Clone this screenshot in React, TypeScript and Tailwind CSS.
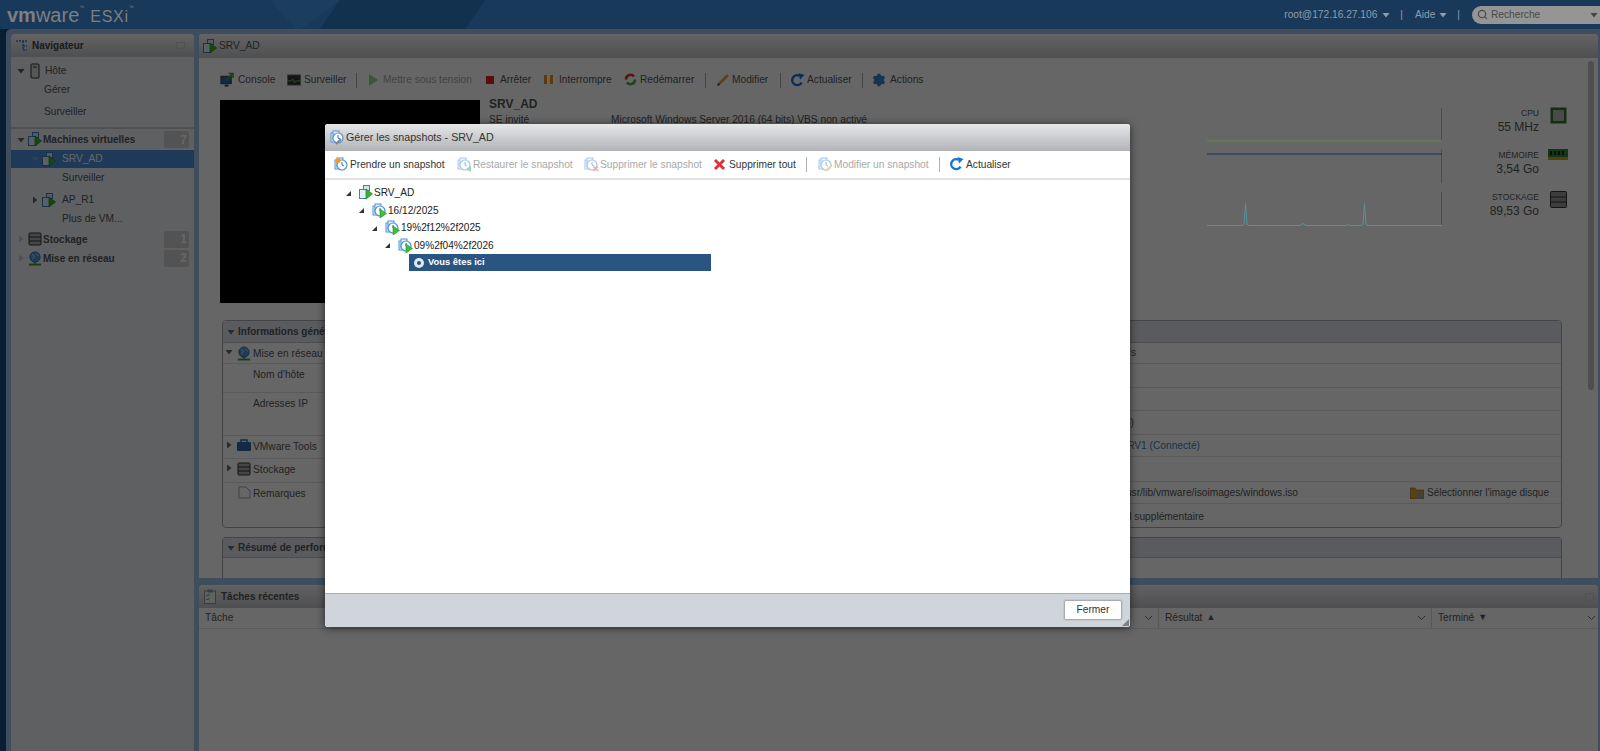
import { ReactNode } from 'react';
import { Search, Settings } from 'lucide-react';

function Caret({ dir = 'down', color = '#5a5a5a' }: { dir?: 'down' | 'right' | 'corner'; color?: string }) {
  const pts = dir === 'down' ? '1.500,3 8.500,3 5,7.500' : dir === 'right' ? '3,1.500 7.500,5 3,8.500' : '8,3 8,8 3,8';
  return (
    <svg width="10" height="10" viewBox="0 0 10 10" className="shrink-0">
      <polygon points={pts} fill={color} />
    </svg>
  );
}

function VmIcon() {
  return (
    <svg width="14" height="15" viewBox="0 0 14 15" className="shrink-0">
      <rect x="4.500" y="0.500" width="6" height="5" fill="#cfe4f8" stroke="#3f7fc4" />
      <rect x="0.500" y="4.500" width="7" height="9" fill="#e4f0fb" stroke="#3f7fc4" />
      <polygon points="7,4 13.500,9 7,14" fill="#35b52f" stroke="#1f7d1c" strokeWidth="0.7" />
    </svg>
  );
}

function SnapIcon({ mark = 'play' }: { mark?: 'play' | 'sun' | 'back' | 'cross' | 'pen' | 'wrench' }) {
  return (
    <svg width="15" height="15" viewBox="0 0 15 15" className="shrink-0">
      <rect x="1" y="3" width="6" height="9" fill="#e8f2fc" stroke="#4d93dc" />
      <rect x="3" y="1" width="6" height="9" fill="#e8f2fc" stroke="#4d93dc" />
      <circle cx="8" cy="8" r="5" fill="#ffffff" stroke="#4d93dc" strokeWidth="1.2" />
      <path d="M8 5v3l2 1" fill="none" stroke="#2a6fb8" strokeWidth="1" />
      {mark === 'play' && <polygon points="8,6 14.500,10.500 8,15" fill="#3cc13a" stroke="#1f8d1c" strokeWidth="0.6" />}
      {mark === 'sun' && <circle cx="4" cy="3.500" r="2.600" fill="#f29a2e" />}
      {mark === 'back' && <polygon points="14,9 9,12 14,15" fill="#4caa5a" />}
      {mark === 'cross' && <path d="M9.500 9.500l4.500 4.500m0-4.500l-4.500 4.500" stroke="#e2534b" strokeWidth="1.600" />}
      {mark === 'pen' && <path d="M8 14l6-6" stroke="#e0a83c" strokeWidth="2.200" />}
      {mark === 'wrench' && <path d="M6 14l5-5" stroke="#7b8794" strokeWidth="2.200" />}
    </svg>
  );
}

function RefreshIcon() {
  return (
    <svg width="14" height="14" viewBox="0 0 14 14" className="shrink-0">
      <path d="M10.600 9.600A5 5 0 1 1 8.400 2.600" fill="none" stroke="#1773d8" strokeWidth="2.400" />
      <polygon points="7.500,0 13.500,2 9,6.500" fill="#1773d8" />
    </svg>
  );
}

function RedX() {
  return (
    <svg width="13" height="13" viewBox="0 0 13 13" className="shrink-0">
      <path d="M2 2l9 9m0-9l-9 9" stroke="#dd3333" strokeWidth="3" />
    </svg>
  );
}

function StorageIcon() {
  return (
    <svg width="14" height="14" viewBox="0 0 14 14" className="shrink-0">
      <rect x="1" y="1" width="12" height="12" rx="1" fill="#b0b0b0" stroke="#333333" />
      <path d="M1 5h12M1 9h12" stroke="#333333" />
    </svg>
  );
}

function NetIcon() {
  return (
    <svg width="14" height="15" viewBox="0 0 15 15" className="shrink-0">
      <circle cx="7.500" cy="6" r="5.500" fill="#4d94e0" stroke="#2b6cb8" />
      <path d="M4 4c2-1 3 0 3 1s-2 1-2 3M9 2c0 2 2 2 3 3" stroke="#cfe4f8" fill="none" />
      <rect x="6" y="11" width="3" height="2" fill="#777777" />
      <rect x="1" y="13" width="13" height="2" fill="#2aa52a" />
    </svg>
  );
}

function Tool({ icon, label, w, off, gap = 'gap-[4px]' }: { icon: ReactNode; label: string; w: string; off?: boolean; gap?: string }) {
  return (
    <div className={`flex items-center ${gap} ${w} ${off ? 'text-[#a9a9a9]' : ''}`}>
      <span className={`flex w-[14px] justify-start ${off ? 'opacity-50' : ''}`}>{icon}</span>
      <span className="whitespace-nowrap">{label}</span>
    </div>
  );
}

function Sep({ w, color = 'bg-[#b0b0b0]' }: { w: string; color?: string }) {
  return (
    <div className={w}>
      <div className={`h-[15px] w-px ${color}`} />
    </div>
  );
}

function NavRow({ h, pl, caret, faint, icon, mr = 'mr-[1px]', text, bold, badge, selected }: {
  h: string; pl: string; caret?: 'down' | 'right'; faint?: boolean; icon?: ReactNode; mr?: string; text: string; bold?: boolean; badge?: string; selected?: boolean;
}) {
  return (
    <div className={`flex items-center ${h} ${pl} ${selected ? 'bg-[#4c91dc] text-white' : ''} ${bold ? 'text-[10px] font-bold' : ''}`}>
      {caret && <Caret dir={caret} color={selected ? '#6ea4e0' : faint ? '#c4c8cc' : '#6a6a6a'} />}
      {icon && <span className={`ml-[2px] ${mr} flex`}>{icon}</span>}
      <span className="whitespace-nowrap">{text}</span>
      {badge && (
        <span className="ml-auto mr-[5px] flex h-[17px] w-[25px] items-center justify-end rounded-[2px] bg-[#cfcfcf] pr-[2px] text-[12px] font-bold text-white">
          {badge}
        </span>
      )}
    </div>
  );
}

function Navigator() {
  return (
    <aside className="flex w-[183px] shrink-0 flex-col rounded-t-[4px] bg-[#ebf0f5]">
      <div className="flex h-[23px] items-center rounded-t-[4px] bg-gradient-to-b from-[#fafafa] to-[#c4c6ca] pl-[4px] pr-[9px]">
        <svg width="14" height="14" viewBox="0 0 14 14" className="mr-[3px]">
          <path d="M1 2h12M8 2v9h4M8 7h4" stroke="#3f7fc4" strokeWidth="1.500" fill="none" strokeDasharray="2 1" />
        </svg>
        <span className="text-[10px] font-bold text-[#444444]">Navigateur</span>
        <span className="ml-auto h-[7px] w-[9px] border border-[#cccccc]" />
      </div>
      <div className="flex h-[26px] items-center pl-[5px] pt-[1px]">
        <Caret color="#5a5a5a" />
        <svg width="10" height="16" viewBox="0 0 10 16" className="ml-[4px] mr-[5px]">
          <rect x="1" y="1" width="8" height="14" rx="1" fill="#d8d8d8" stroke="#2f2f2f" />
          <path d="M3 4h4" stroke="#2f2f2f" />
        </svg>
        Hôte
      </div>
      <div className="flex h-[14px] items-center pl-[33px]">Gérer</div>
      <div className="flex h-[30px] items-center pl-[33px]">Surveiller</div>
      <div className="h-[2px] bg-[#c6c9cd]" />
      <NavRow h="h-[21px]" pl="pl-[5px]" caret="down" icon={<VmIcon />} text="Machines virtuelles" bold badge="7" />
      <NavRow h="h-[18px]" pl="pl-[19px]" caret="down" icon={<VmIcon />} mr="mr-[6px]" text="SRV_AD" selected />
      <div className="flex h-[20px] items-center pl-[51px]">Surveiller</div>
      <NavRow h="h-[24px]" pl="pl-[19px]" caret="right" icon={<VmIcon />} mr="mr-[6px]" text="AP_R1" />
      <div className="flex h-[14px] items-center pl-[51px]">Plus de VM...</div>
      <NavRow h="h-[23px]" pl="pl-[5px] pt-[3px]" caret="right" faint icon={<StorageIcon />} text="Stockage" bold badge="1" />
      <NavRow h="h-[18px]" pl="pl-[5px]" caret="right" faint icon={<NetIcon />} text="Mise en réseau" bold badge="2" />
    </aside>
  );
}

function MainToolbar() {
  return (
    <div className="mt-[12px] flex h-[20px] items-center pl-[21px]">
      <Tool w="w-[67px]" label="Console" icon={
        <svg width="15" height="15" viewBox="0 0 15 15"><rect x="1" y="4" width="11" height="8" fill="#2f6aa8" stroke="#333333" /><path d="M5 14h4" stroke="#333333" strokeWidth="2" /><path d="M7 8l6-6M9 1h5v5" stroke="#2da82d" strokeWidth="1.600" fill="none" /></svg>
      } />
      <Tool w="w-[69px]" gap="gap-[3px]" label="Surveiller" icon={
        <svg width="15" height="12" viewBox="0 0 15 12"><rect x="0.500" y="0.500" width="14" height="11" fill="#333333" stroke="#888888" /><path d="M1 7h4l1-2 2 4 1-2h5" stroke="#58d058" fill="none" /></svg>
      } />
      <Sep w="w-[13px]" />
      <Tool w="w-[117px]" gap="gap-0" off label="Mettre sous tension" icon={<svg width="9" height="12" viewBox="0 0 9 12"><polygon points="0,0 9,6 0,12" fill="#35b52f" /></svg>} />
      <Tool w="w-[58px]" gap="gap-0" label="Arrêter" icon={<span className="h-[8px] w-[8px] bg-[#e02020]" />} />
      <Tool w="w-[80px]" gap="gap-[1px]" label="Interrompre" icon={<svg width="9" height="9" viewBox="0 0 9 9"><path d="M0 0h3v9H0zM6 0h3v9H6z" fill="#f0920f" /></svg>} />
      <Tool w="w-[81px]" gap="gap-[2px]" label="Redémarrer" icon={
        <svg width="13" height="13" viewBox="0 0 13 13"><path d="M2 6.500a4.500 4.500 0 0 1 8-3" fill="none" stroke="#e03030" strokeWidth="2.600" /><path d="M11 6.500a4.500 4.500 0 0 1-8 3" fill="none" stroke="#35b52f" strokeWidth="2.600" /></svg>
      } />
      <Sep w="w-[11px]" />
      <Tool w="w-[64px]" gap="gap-[2px]" label="Modifier" icon={<svg width="14" height="14" viewBox="0 0 14 14"><path d="M2 12L12 2" stroke="#e2a63a" strokeWidth="2.600" /><path d="M1 13l1.500-3 1.500 1.500z" fill="#333333" /></svg>} />
      <Sep w="w-[11px]" />
      <Tool w="w-[71px]" gap="gap-[2px]" label="Actualiser" icon={<RefreshIcon />} />
      <Sep w="w-[10px]" />
      <Tool w="w-[60px]" label="Actions" icon={<Settings size={14} fill="#3f7fc4" stroke="#3f7fc4" />} />
    </div>
  );
}

function Stat({ label, value, icon }: { label: string; value: string; icon: ReactNode }) {
  return (
    <div className="flex h-[42px] items-start">
      <div className="w-[97px] text-right">
        <div className="text-[8.500px] leading-[12px]">{label}</div>
        <div className="text-[12px] leading-[17px]">{value}</div>
      </div>
      <div className="ml-[9px] flex w-[20px] justify-center">{icon}</div>
    </div>
  );
}

function TopSection() {
  return (
    <div className="mt-[10px] flex h-[203px] pl-[21px]">
      <div className="w-[260px] shrink-0 bg-black" />
      <div className="w-[727px] shrink-0 pl-[9px]">
        <div className="text-[12px] font-bold leading-[8px]">SRV_AD</div>
        <div className="mt-[5px] flex leading-[14px]">
          <span className="w-[122px]">SE invité</span>
          <span className="whitespace-nowrap">Microsoft Windows Server 2016 (64 bits) VBS non activé</span>
        </div>
      </div>
      <svg width="235" height="125" viewBox="0 0 235 125" className="relative z-20 mt-[8px] shrink-0">
        <path d="M234.500 0v33M234.500 42v33M234.500 84v34" stroke="#4c4c4c" fill="none" />
        <path d="M0 33h235" stroke="#648a4c" strokeWidth="1" />
        <path d="M0 46h235" stroke="#12305a" strokeWidth="1.200" />
        <path d="M0 117.500h35l2-1 1.500-21 1.500 21 2 1h51l3-2 3 2h40l2-1 2 1h11l2-1 1.500-21 1.500 21 2 1H235" stroke="#5a8f9c" fill="none" />
      </svg>
      <div className="mt-[7px] flex flex-col">
        <Stat label="CPU" value="55 MHz" icon={
          <svg width="17" height="17" viewBox="0 0 17 17"><rect x="0.500" y="0.500" width="16" height="16" fill="#2e7a2e" /><rect x="3" y="3" width="11" height="11" fill="#b8b8b8" /></svg>
        } />
        <Stat label="MÉMOIRE" value="3,54 Go" icon={
          <svg width="20" height="11" viewBox="0 0 20 11"><rect width="20" height="8" fill="#2e8a3a" /><rect y="8" width="20" height="3" fill="#c6a62a" /><path d="M3 2v4M7 2v4M11 2v4M15 2v4" stroke="#222222" strokeWidth="2" /></svg>
        } />
        <Stat label="STOCKAGE" value="89,53 Go" icon={
          <svg width="17" height="17" viewBox="0 0 17 17"><rect x="0.500" y="0.500" width="16" height="16" rx="1" fill="#999999" stroke="#333333" /><path d="M1 6h15M1 11h15" stroke="#333333" /></svg>
        } />
      </div>
    </div>
  );
}

function LeftRow({ h, caret, icon, text, line = true }: { h: string; caret?: 'down' | 'right'; icon?: ReactNode; text: string; line?: boolean }) {
  return (
    <div className={`flex ${h} items-start pt-[3px] ${line ? 'border-b border-[#e0e0e0]' : ''}`}>
      <span className="flex w-[12px] justify-center pt-[1px]">{caret && <Caret dir={caret} color="#6a6a6a" />}</span>
      <span className="flex w-[18px] justify-center">{icon}</span>
      <span className="whitespace-nowrap leading-[15px]">{text}</span>
    </div>
  );
}

function RightRow({ h, w, text, color, children }: { h: string; w: string; text?: string; color?: string; children?: ReactNode }) {
  return (
    <div className={`flex ${h} items-center border-b border-[#e0e0e0] last:border-b-0`}>
      <span className={`${w} whitespace-nowrap text-right ${color ?? ''}`}>{text}</span>
      {children}
    </div>
  );
}

function InfoPanels() {
  return (
    <div className="ml-[23px] mr-[36px] mt-[17px] flex flex-col">
      <div className="h-[208px] overflow-hidden rounded-[4px] border border-[#aaaaaa]">
        <div className="flex h-[22px] items-center border-b border-[#c0c0c0] bg-[#dfe3eb] pl-[3px]">
          <Caret color="#6a6a6a" />
          <span className="ml-[2px] text-[10px] font-bold">Informations générales</span>
        </div>
        <div className="flex">
          <div className="w-[578px] shrink-0">
            <LeftRow h="h-[21px]" caret="down" icon={<NetIcon />} text="Mise en réseau" />
            <div className="h-[29px] border-b border-[#e0e0e0] pl-[30px] pt-[3px]">Nom d'hôte</div>
            <div className="h-[43px] border-b border-[#e0e0e0] pl-[30px] pt-[3px]">Adresses IP</div>
            <LeftRow h="h-[23px]" caret="right" icon={
              <svg width="14" height="12" viewBox="0 0 14 12"><rect y="3" width="14" height="9" rx="1" fill="#2e6ca8" /><path d="M4 3V1h6v2" stroke="#2e6ca8" fill="none" strokeWidth="1.500" /></svg>
            } text="VMware Tools" />
            <LeftRow h="h-[24px]" caret="right" icon={<StorageIcon />} text="Stockage" />
            <LeftRow h="h-[24px]" icon={
              <svg width="13" height="13" viewBox="0 0 13 13"><path d="M1 1h7l4 4v7H1z" fill="#ffffff" stroke="#9aa4ad" /></svg>
            } text="Remarques" line={false} />
          </div>
          <div className="flex-1 border-l border-[#e0e0e0]">
            <RightRow h="h-[21px]" w="w-[334px]" text="2 vCPUs" />
            <RightRow h="h-[24px]" w="w-[300px]" text="4 Go" />
            <RightRow h="h-[23px]" w="w-[300px]" text="60 Go" />
            <RightRow h="h-[24px]" w="w-[332px]" text="Disque dur 1 (60 Go)" />
            <RightRow h="h-[22px]" w="w-[398px]" text="VM Network AD-SRV1 (Connecté)" color="text-[#3f7fc4]" />
            <RightRow h="h-[25px]" w="w-[300px]" text="4 Mo" />
            <RightRow h="h-[22px]" w="w-[496px]" text="[datastore1] /usr/lib/vmware/isoimages/windows.iso">
              <span className="ml-[112px] flex w-[14px] justify-center">
                <svg width="14" height="12" viewBox="0 0 14 12"><path d="M0 1h5l1 2h8v9H0z" fill="#d9a441" stroke="#8a6420" strokeWidth="0.600" /><circle cx="10" cy="9" r="3" fill="#9aa4ad" /></svg>
              </span>
              <span className="ml-[3px] whitespace-nowrap text-[10px]">Sélectionner l'image disque</span>
            </RightRow>
            <RightRow h="h-[25px]" w="w-[402px]" text="Matériel supplémentaire" />
          </div>
        </div>
      </div>
      <div className="mt-[9px] h-[60px] rounded-t-[4px] border border-b-0 border-[#aaaaaa]">
        <div className="flex h-[20px] items-center border-b border-[#c0c0c0] bg-[#dfe3eb] pl-[3px]">
          <Caret color="#6a6a6a" />
          <span className="ml-[2px] text-[10px] font-bold">Résumé de performances</span>
        </div>
      </div>
    </div>
  );
}

function MainPanel() {
  return (
    <section className="flex h-[544px] flex-col overflow-hidden rounded-t-[4px] bg-white">
      <div className="flex h-[24px] shrink-0 items-center bg-gradient-to-b from-[#fafafa] to-[#c4c6ca] pl-[4px]">
        <VmIcon />
        <span className="ml-[2px]">SRV_AD</span>
      </div>
      <div className="relative flex-1 overflow-hidden">
        <MainToolbar />
        <TopSection />
        <InfoPanels />
        <div className="absolute right-[4px] top-[3px] h-[329px] w-[6px] rounded-full bg-[#c4c4c4]" />
      </div>
    </section>
  );
}

function Chevron() {
  return (
    <svg width="9" height="6" viewBox="0 0 9 6" className="ml-auto">
      <path d="M1 1l3.500 3.500L8 1" stroke="#777777" fill="none" />
    </svg>
  );
}

function TasksPanel() {
  return (
    <section className="flex flex-1 flex-col rounded-t-[4px] bg-white">
      <div className="flex h-[23px] shrink-0 items-center rounded-t-[4px] bg-gradient-to-b from-[#f4f4f4] to-[#c4c6ca] pl-[5px] pr-[4px]">
        <svg width="12" height="15" viewBox="0 0 12 15">
          <rect x="0.500" y="2" width="11" height="12.500" fill="#f2f6ee" stroke="#7a9ab5" />
          <rect x="3.500" y="0.500" width="5" height="3" fill="#7a9ab5" />
          <path d="M2.500 6l1 1 2-2M2.500 10l1 1 2-2" stroke="#2aa52a" fill="none" />
        </svg>
        <span className="ml-[5px] text-[10px] font-bold">Tâches récentes</span>
        <span className="ml-auto h-[8px] w-[9px] border border-[#cccccc]" />
      </div>
      <div className="flex h-[21px] shrink-0 items-center border-b border-[#e4e4e4]">
        <div className="flex h-full w-[960px] items-center border-r border-[#dcdcdc] pl-[6px] pr-[5px]">
          Tâche
          <Chevron />
        </div>
        <div className="flex h-full w-[273px] items-center border-r border-[#dcdcdc] pl-[6px] pr-[5px]">
          Résultat <span className="ml-[4px] text-[9px]">▲</span>
          <Chevron />
        </div>
        <div className="flex h-full flex-1 items-center pl-[6px] pr-[2px]">
          Terminé <span className="ml-[4px] text-[9px]">▼</span>
          <Chevron />
        </div>
      </div>
    </section>
  );
}

function TreeRow({ pl, label, icon }: { pl: string; label: string; icon: ReactNode }) {
  return (
    <div className={`flex h-[17.500px] items-center ${pl}`}>
      <Caret dir="corner" color="#333333" />
      <span className="ml-[6px] mr-[1px] flex">{icon}</span>
      <span className="text-[10.100px]">{label}</span>
    </div>
  );
}

function SnapshotDialog() {
  return (
    <div className="absolute left-[325px] top-[124px] z-30 flex h-[503px] w-[805px] flex-col overflow-hidden rounded-[3px] bg-white text-[#333333] shadow-[0_1px_8px_rgba(0,0,0,0.6)]">
      <div className="flex h-[27px] shrink-0 items-center bg-gradient-to-b from-[#e6e7e9] to-[#b2b3b6] pl-[5px] text-[10.700px]">
        <SnapIcon mark="wrench" />
        <span className="ml-[1px]">Gérer les snapshots - SRV_AD</span>
      </div>
      <div className="flex h-[29px] shrink-0 items-center border-b-2 border-[#e2e2e2] pl-[9px]">
        <Tool w="w-[123px]" gap="gap-[2px]" label="Prendre un snapshot" icon={<SnapIcon mark="sun" />} />
        <Tool w="w-[127px]" gap="gap-[2px]" off label="Restaurer le snapshot" icon={<SnapIcon mark="back" />} />
        <Tool w="w-[129px]" gap="gap-[2px]" off label="Supprimer le snapshot" icon={<SnapIcon mark="cross" />} />
        <Tool w="w-[93px]" gap="gap-[2px]" label="Supprimer tout" icon={<RedX />} />
        <Sep w="w-[12px]" />
        <Tool w="w-[121px]" gap="gap-[2px]" off label="Modifier un snapshot" icon={<SnapIcon mark="pen" />} />
        <Sep w="w-[11px]" />
        <Tool w="w-[70px]" gap="gap-[2px]" label="Actualiser" icon={<RefreshIcon />} />
      </div>
      <div className="flex-1 pt-[4px] text-[#222222]">
        <TreeRow pl="pl-[18px]" label="SRV_AD" icon={<VmIcon />} />
        <TreeRow pl="pl-[31px]" label="16/12/2025" icon={<SnapIcon />} />
        <TreeRow pl="pl-[44px]" label="19%2f12%2f2025" icon={<SnapIcon />} />
        <TreeRow pl="pl-[57px]" label="09%2f04%2f2026" icon={<SnapIcon />} />
        <div className="ml-[84px] flex h-[17px] w-[302px] items-center bg-[#2a5582] pl-[5px] text-[9.400px] font-bold text-white">
          <span className="flex h-[10px] w-[10px] items-center justify-center rounded-full bg-[#dfe8f2]">
            <span className="h-[4px] w-[4px] rounded-full bg-[#2a5582]" />
          </span>
          <span className="ml-[4px]">Vous êtes ici</span>
        </div>
      </div>
      <div className="flex h-[34px] shrink-0 items-start justify-end border-t border-[#a9adb0] bg-[#d0d5db] pr-[8px] pt-[6px]">
        <button className="h-[20px] w-[58px] rounded-[2px] border border-[#a8acb0] bg-white text-[#333333] shadow-[0_0_0_1px_#c4c8cd]">Fermer</button>
      </div>
      <svg width="7" height="7" viewBox="0 0 7 7" className="absolute bottom-[1px] right-[1px]">
        <polygon points="7,0 7,7 0,7" fill="#7d8186" />
      </svg>
    </div>
  );
}

export default function App() {
  return (
    <div className="relative h-[751px] w-[1600px] overflow-hidden bg-[#194d7f] font-['Liberation_Sans',Arial,sans-serif] text-[10.200px] text-[#565656]">
      <header className="relative z-20 flex h-[29px] items-center overflow-hidden bg-[#18395a] pl-[7px] text-[#8f9dab]">
        <span className="absolute left-[270px] top-0 h-[29px] w-[70px] bg-[#1c3e5e] [clip-path:polygon(0_0,100%_0,45%_100%,36%_100%)]" />
        <span className="absolute left-[320px] top-0 h-[29px] w-[165px] bg-[#12314f] [clip-path:polygon(0_100%,88%_100%,100%_0,12%_0)]" />
        <span className="relative flex items-baseline leading-none text-[#7f7f7f]">
          <span className="text-[20px] font-bold">vm</span>
          <span className="text-[20px]">ware</span>
          <span className="self-start text-[5px]">™</span>
          <span className="ml-[6px] text-[16px] tracking-[0.700px]">ESXi</span>
          <span className="self-start text-[5px]">™</span>
        </span>
        <div className="relative ml-auto flex items-center">
          <span>root@172.16.27.106</span>
          <span className="ml-[4px]"><Caret color="#8f9dab" /></span>
          <span className="ml-[9px] mr-[12px]">|</span>
          <span>Aide</span>
          <span className="ml-[3px]"><Caret color="#8f9dab" /></span>
          <span className="ml-[9px] mr-[12px]">|</span>
          <div className="flex h-[18px] w-[128px] items-center rounded-l-full bg-[#959595] pl-[5px] text-[#4a4a4a]">
            <Search size={11} strokeWidth={2.500} className="mr-[3px]" />
            Recherche
            <span className="ml-auto mr-[1px]"><Caret color="#444444" /></span>
          </div>
        </div>
      </header>

      <div className="ml-[6px] flex h-[722px] gap-[5px] rounded-tl-[5px] bg-[#9dc0e6] pl-[5px] pr-[2px] pt-[5px]">
        <Navigator />
        <div className="flex min-w-0 flex-1 flex-col gap-[7px]">
          <MainPanel />
          <TasksPanel />
        </div>
      </div>

      <div className="absolute inset-x-0 bottom-0 top-[29px] z-10 bg-black/60" />
      <SnapshotDialog />
    </div>
  );
}
